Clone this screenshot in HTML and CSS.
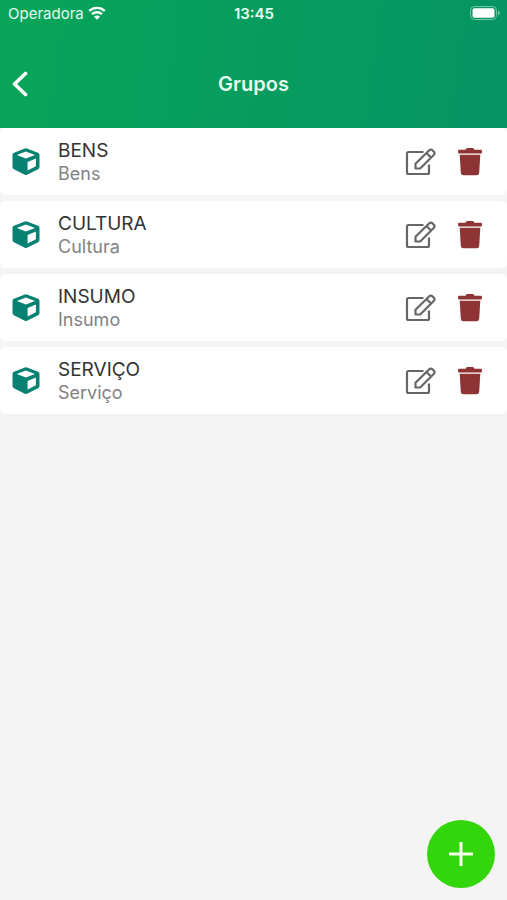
FILE: index.html
```html
<!DOCTYPE html>
<html lang="pt-BR">
<head>
<meta charset="utf-8">
<meta name="viewport" content="width=device-width, initial-scale=1">
<title>Grupos</title>
<link rel="stylesheet" href="styles.css">
</head>
<body>
<svg class="sprite" aria-hidden="true">
  <symbol id="cube" viewBox="0 0 28 28"><path fill-rule="evenodd" d="M12.8.4a3 3 0 0 1 2.2 0L26 4.700a2.400 2.400 0 0 1 1.500 2.300v12a2.400 2.400 0 0 1-1.400 2.200L15 26.700a2.600 2.600 0 0 1-2.200 0L1.900 21.200A2.400 2.400 0 0 1 .5 19V7A2.400 2.400 0 0 1 2 4.700zM13.900 3.500 4.800 6.900l9.100 3.700L23 6.900zM15.600 14v8.400l8.300-4.200V10.600z"/></symbol>
  <symbol id="edit" viewBox="0 0 31 28"><path d="M18.500 4H3.500Q2 4 2 5.500v19Q2 26 3.500 26h19q1.500 0 1.500-1.500v-8M10.500 20.500v-4.700L24.300 2.200q1.500-1.300 3 0l1.600 1.600q1.300 1.500 0 3L15.200 20.500zM21.500 5l4.700 4.700"/></symbol>
  <symbol id="trash" viewBox="0 0 24 28"><path d="M9.300 0h5.400q.8 0 1.200.7l.5 1.100H23q.9 0 .9.900v1.800q0 .9-.9.900H1q-.9 0-.9-.9V2.700q0-.9.900-.9h6.600L8.100.7Q8.500 0 9.300 0zM1.700 6.800h20.600l-1.100 18q-.2 2.500-2.600 2.500H5.400q-2.400 0-2.600-2.500z"/></symbol>
</svg>
<header class="top">
  <div class="status">
    <div class="carrier">
      <span>Operadora</span>
      <svg class="wifi" viewBox="0 0 18 14" aria-hidden="true">
        <path class="arc" d="M1.200 5a11.300 11.300 0 0 1 15.600 0M4 8.200a7.200 7.200 0 0 1 10 0"/>
        <path class="dot" d="M9 13.800 6 10.800a4.200 4.200 0 0 1 6 0z"/>
      </svg>
    </div>
    <span class="clock">13:45</span>
    <svg class="battery" viewBox="0 0 30 14" aria-hidden="true">
      <rect class="shell" x="0.5" y="0.5" width="26" height="13" rx="4"/>
      <rect class="charge" x="2.500" y="2.200" width="22" height="9.600" rx="2"/>
      <path class="tip" d="M28 4.500a2.600 2.600 0 0 1 0 5z"/>
    </svg>
  </div>
  <div class="nav">
    <button class="back" type="button" aria-label="Voltar">
      <svg viewBox="0 0 16 26" aria-hidden="true"><path d="M13.500 2.500 2.500 13l11 10.500"/></svg>
    </button>
    <h1>Grupos</h1>
  </div>
</header>
<main>
  <ul class="groups">
    <li class="card">
      <svg class="cube" aria-hidden="true"><use href="#cube"/></svg>
      <div class="label"><h2>BENS</h2><p>Bens</p></div>
      <button class="action" type="button" aria-label="Editar Bens"><svg class="edit"><use href="#edit"/></svg></button>
      <button class="action" type="button" aria-label="Excluir Bens"><svg class="trash"><use href="#trash"/></svg></button>
    </li>
    <li class="card">
      <svg class="cube" aria-hidden="true"><use href="#cube"/></svg>
      <div class="label"><h2>CULTURA</h2><p>Cultura</p></div>
      <button class="action" type="button" aria-label="Editar Cultura"><svg class="edit"><use href="#edit"/></svg></button>
      <button class="action" type="button" aria-label="Excluir Cultura"><svg class="trash"><use href="#trash"/></svg></button>
    </li>
    <li class="card">
      <svg class="cube" aria-hidden="true"><use href="#cube"/></svg>
      <div class="label"><h2>INSUMO</h2><p>Insumo</p></div>
      <button class="action" type="button" aria-label="Editar Insumo"><svg class="edit"><use href="#edit"/></svg></button>
      <button class="action" type="button" aria-label="Excluir Insumo"><svg class="trash"><use href="#trash"/></svg></button>
    </li>
    <li class="card">
      <svg class="cube" aria-hidden="true"><use href="#cube"/></svg>
      <div class="label"><h2>SERVIÇO</h2><p>Serviço</p></div>
      <button class="action" type="button" aria-label="Editar Serviço"><svg class="edit"><use href="#edit"/></svg></button>
      <button class="action" type="button" aria-label="Excluir Serviço"><svg class="trash"><use href="#trash"/></svg></button>
    </li>
  </ul>
</main>
<button class="add" type="button" aria-label="Adicionar grupo">
  <svg viewBox="0 0 24 24" aria-hidden="true"><path d="M12 0v24M0 12h24"/></svg>
</button>
</body>
</html>
```

FILE: styles.css
```css
* {
  box-sizing: border-box;
}

body {
  margin: 0;
  min-height: 100vh;
  background: #f4f4f4;
  font-family: Inter, "Liberation Sans", sans-serif;
}

h1, h2, p, ul {
  margin: 0;
  padding: 0;
}

button {
  display: flex;
  padding: 0;
  border: 0;
  background: none;
  cursor: pointer;
}

.sprite {
  display: none;
}

.top {
  background: linear-gradient(98deg, #08a558, #059465);
  color: #e6fbf0;
}

.status {
  display: grid;
  grid-template-columns: 1fr auto 1fr;
  align-items: center;
  height: 26px;
  padding: 0 7px 0 8px;
  font-size: 15px;
}

.carrier {
  display: flex;
  align-items: center;
  gap: 4px;
}

.clock {
  font-size: 15px;
  font-weight: 600;
}

.wifi {
  width: 18px;
  height: 14px;
}

.arc {
  fill: none;
  stroke: #fff;
  stroke-width: 2.4;
}

.dot, .charge {
  fill: #fff;
}

.battery {
  justify-self: end;
  width: 30px;
  height: 14px;
}

.shell {
  fill: none;
  stroke: #74c9a2;
}

.tip {
  fill: #74c9a2;
}

.nav {
  display: grid;
  grid-template-columns: 1fr auto 1fr;
  align-items: center;
  padding: 36px 12px 22px;
}

.nav h1 {
  font-size: 20px;
  line-height: 24px;
  font-weight: 600;
}

.back {
  align-items: center;
  width: 44px;
  height: 44px;
}

.back svg {
  width: 16px;
  height: 26px;
  fill: none;
  stroke: #fff;
  stroke-width: 3.6;
  stroke-linecap: round;
  stroke-linejoin: round;
}

.groups {
  display: grid;
  gap: 6px;
  list-style: none;
}

.card {
  display: flex;
  align-items: center;
  padding: 11px 25px 10px 12px;
  border-radius: 6px;
  background: #fff;
}

.cube {
  width: 28px;
  height: 28px;
  fill: #078272;
}

.label {
  flex: 1;
  margin-left: 18px;
}

.label h2 {
  color: #333;
  font-size: 19px;
  line-height: 23px;
  font-weight: 400;
}

.label p {
  color: #828282;
  font-size: 18px;
  line-height: 23px;
}

.action {
  margin-left: 22px;
}

.edit {
  width: 31px;
  height: 28px;
  fill: none;
  stroke: #666;
  stroke-width: 2.2;
  stroke-linejoin: round;
}

.trash {
  width: 24px;
  height: 28px;
  fill: #8e3434;
}

.add {
  position: fixed;
  right: 12px;
  bottom: 12px;
  width: 68px;
  height: 68px;
  align-items: center;
  justify-content: center;
  border-radius: 50%;
  background: #33d60a;
}

.add svg {
  width: 24px;
  height: 24px;
  fill: none;
  stroke: #f4ffe9;
  stroke-width: 3;
}
```
